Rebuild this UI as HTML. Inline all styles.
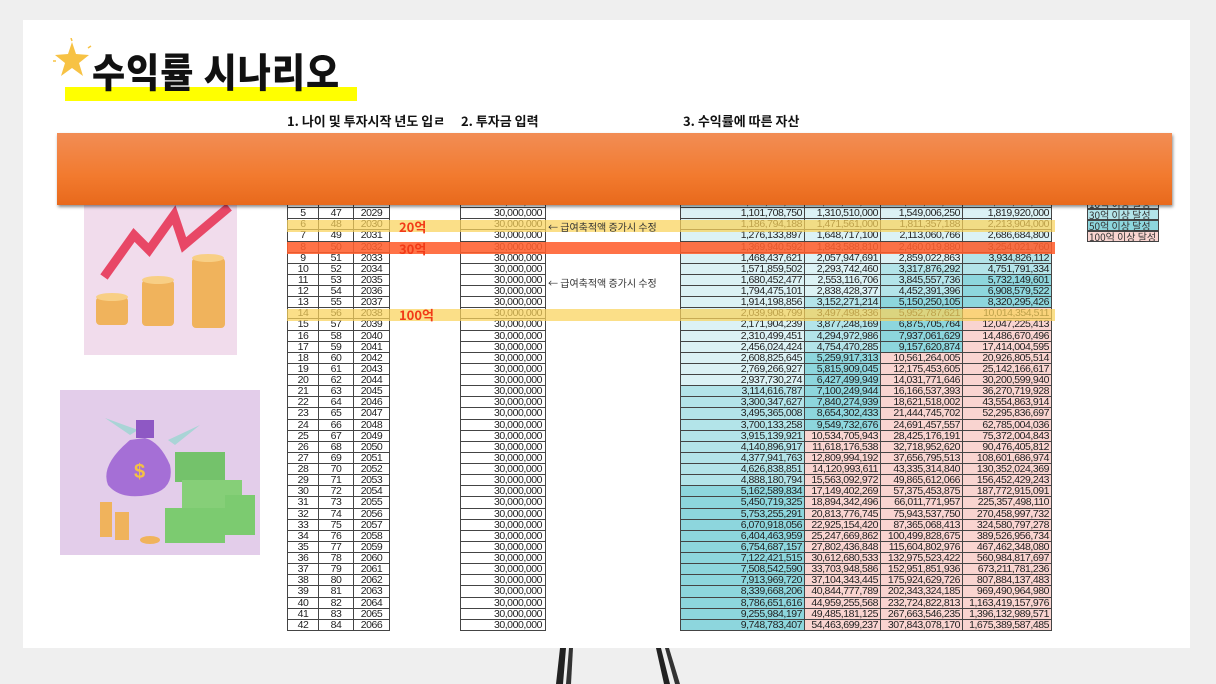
<!DOCTYPE html>
<html><head><meta charset="utf-8">
<style>
*{margin:0;padding:0;box-sizing:border-box}
body{width:1216px;height:684px;overflow:hidden;background:#efefef;position:relative;font-family:"Liberation Sans","Noto Sans CJK KR",sans-serif}
.slide{position:absolute;left:23px;top:20px;width:1167px;height:628px;background:#fff}
.title{position:absolute;left:92px;top:42px;font-size:36px;font-weight:900;color:#111;font-family:"Noto Sans CJK KR","NanumGothic",sans-serif;letter-spacing:1px;z-index:2;transform:scaleY(1.1);transform-origin:top left}
.ybar{position:absolute;left:65px;top:87px;width:292px;height:14px;background:#ffff00;z-index:1}
.hdr{position:absolute;top:111px;font-size:13px;font-weight:bold;color:#111;font-family:"Noto Sans CJK KR",sans-serif;white-space:nowrap}
.orange{position:absolute;left:57px;top:133px;width:1115px;height:72px;background:linear-gradient(#f28d55,#f27a2e 60%,#e8691c);box-shadow:1px 2px 3px rgba(0,0,0,.45);z-index:10}
.tbl{position:absolute;left:287px;top:197px;width:780px;font-family:"Liberation Sans",sans-serif;font-size:10.5px;letter-spacing:-0.45px;color:#222}
.r{position:relative;height:11.14px;line-height:11px}
.r i{position:absolute;top:0;height:11.14px;font-style:normal;border-right:1px solid #444;border-bottom:1px solid #444;text-align:center;white-space:nowrap;overflow:hidden}
.a{left:0;width:32px;border-left:1px solid #444}
.b{left:32px;width:35px}
.c{left:67px;width:36px}
.m{left:173px;width:86px;text-align:right!important;padding-right:3px;border-left:1px solid #444}
.r i.v{text-align:right;padding-right:2px}
.w1{left:393px;width:125px;border-left:1px solid #444}
.w2{left:518px;width:76px}
.w3{left:594px;width:82px}
.w4{left:676px;width:89px}
.L{background:#dcf2f5}.M{background:#b3e4e9}.T{background:#8dd6dd}.P{background:#f9d4d0}
.hl{position:absolute;left:287px;width:768px;height:12px;z-index:3}
.note{position:absolute;left:548px;font-size:10px;color:#333;font-family:"Noto Sans CJK KR",sans-serif;z-index:4;white-space:nowrap}
.big{position:absolute;left:399px;font-size:13px;font-weight:bold;color:#f23a17;font-family:"Noto Sans CJK KR",sans-serif;z-index:4}
.leg{position:absolute;left:1087px;width:72px;height:11px;font-size:10px;line-height:10px;border:1px solid #444;font-family:"Noto Sans CJK KR",sans-serif;color:#333;padding-left:1px;white-space:nowrap}
</style></head><body>
<div class="slide"></div>

<svg style="position:absolute;left:52px;top:38px" width="42" height="44" viewBox="0 0 42 44">
<polygon points="20,4 24,16 37,17 27,25 31,38 20,30 9,38 13,25 3,17 16,16" fill="#f7c244"/>
<line x1="19" y1="0" x2="20" y2="3" stroke="#f7c244" stroke-width="1.5"/>
<line x1="36" y1="10" x2="39" y2="8" stroke="#f7c244" stroke-width="1.5"/>
<line x1="1" y1="23" x2="4" y2="23" stroke="#f7c244" stroke-width="1.5"/>
</svg>
<div class="ybar"></div>
<div class="title">수익률 시나리오</div>

<div class="hdr" style="left:287px">1. 나이 및 투자시작 년도 입ㄹ</div>
<div class="hdr" style="left:461px">2. 투자금 입력</div>
<div class="hdr" style="left:683px">3. 수익률에 따른 자산</div>

<div style="position:absolute;left:84px;top:205px;width:153px;height:150px;background:#f1dcec;overflow:hidden">
<svg width="153" height="150" viewBox="0 0 153 150">
<polyline points="20,72 50,30 65,45 90,10 100,40 145,2" fill="none" stroke="#e84766" stroke-width="9" stroke-linejoin="miter"/>
<rect x="12" y="92" width="32" height="28" rx="4" fill="#f0b35c"/>
<ellipse cx="28" cy="92" rx="16" ry="4" fill="#f8cf85"/>
<rect x="58" y="75" width="32" height="46" rx="4" fill="#f0b35c"/>
<ellipse cx="74" cy="75" rx="16" ry="4" fill="#f8cf85"/>
<rect x="108" y="53" width="33" height="70" rx="4" fill="#f0b35c"/>
<ellipse cx="124" cy="53" rx="16" ry="4" fill="#f8cf85"/>
</svg></div>

<div style="position:absolute;left:60px;top:390px;width:200px;height:165px;background:#e3cdea;overflow:hidden">
<svg width="200" height="165" viewBox="0 0 200 165">
<path d="M45,28 L70,45 L78,40 Z" fill="#a9d4d6"/>
<path d="M140,35 L115,55 L108,50 Z" fill="#a9d4d6"/>
<path d="M70,50 Q40,75 48,95 Q60,110 88,105 Q115,100 110,75 Q100,52 85,48 Z" fill="#a56fd6"/>
<rect x="76" y="30" width="18" height="18" fill="#8e58c4"/>
<text x="74" y="88" font-size="20" fill="#f4c144" font-family="Liberation Sans" font-weight="bold">$</text>
<rect x="115" y="62" width="50" height="30" fill="#74c26b"/>
<rect x="122" y="90" width="60" height="30" fill="#86cf78"/>
<rect x="105" y="118" width="60" height="35" fill="#7ccb70"/>
<rect x="165" y="105" width="30" height="40" fill="#7ccb70"/>
<rect x="40" y="112" width="12" height="35" fill="#f0b35c"/>
<rect x="55" y="122" width="14" height="28" fill="#f0b35c"/>
<ellipse cx="90" cy="150" rx="10" ry="4" fill="#f0b35c"/>
</svg></div>

<div class="orange"></div>

<div class="tbl">
<div class="r"><i class="a">4</i><i class="b">46</i><i class="c">2028</i><i class="m">30,000,000</i><i class="v w1 L">1,020,675,000</i><i class="v w2 L">1,164,100,000</i><i class="v w3 L">1,320,875,000</i><i class="v w4 L">1,491,000,000</i></div>
<div class="r"><i class="a">5</i><i class="b">47</i><i class="c">2029</i><i class="m">30,000,000</i><i class="v w1 L">1,101,708,750</i><i class="v w2 L">1,310,510,000</i><i class="v w3 L">1,549,006,250</i><i class="v w4 L">1,819,920,000</i></div>
<div class="r"><i class="a">6</i><i class="b">48</i><i class="c">2030</i><i class="m">30,000,000</i><i class="v w1 L">1,186,794,188</i><i class="v w2 L">1,471,561,000</i><i class="v w3 L">1,811,357,188</i><i class="v w4 L">2,213,904,000</i></div>
<div class="r"><i class="a">7</i><i class="b">49</i><i class="c">2031</i><i class="m">30,000,000</i><i class="v w1 L">1,276,133,897</i><i class="v w2 L">1,648,717,100</i><i class="v w3 L">2,113,060,766</i><i class="v w4 L">2,686,684,800</i></div>
<div class="r"><i class="a">8</i><i class="b">50</i><i class="c">2032</i><i class="m">30,000,000</i><i class="v w1 L">1,369,940,592</i><i class="v w2 L">1,843,588,810</i><i class="v w3 L">2,460,019,880</i><i class="v w4 M">3,254,021,760</i></div>
<div class="r"><i class="a">9</i><i class="b">51</i><i class="c">2033</i><i class="m">30,000,000</i><i class="v w1 L">1,468,437,621</i><i class="v w2 L">2,057,947,691</i><i class="v w3 L">2,859,022,863</i><i class="v w4 M">3,934,826,112</i></div>
<div class="r"><i class="a">10</i><i class="b">52</i><i class="c">2034</i><i class="m">30,000,000</i><i class="v w1 L">1,571,859,502</i><i class="v w2 L">2,293,742,460</i><i class="v w3 M">3,317,876,292</i><i class="v w4 M">4,751,791,334</i></div>
<div class="r"><i class="a">11</i><i class="b">53</i><i class="c">2035</i><i class="m">30,000,000</i><i class="v w1 L">1,680,452,477</i><i class="v w2 L">2,553,116,706</i><i class="v w3 M">3,845,557,736</i><i class="v w4 T">5,732,149,601</i></div>
<div class="r"><i class="a">12</i><i class="b">54</i><i class="c">2036</i><i class="m">30,000,000</i><i class="v w1 L">1,794,475,101</i><i class="v w2 L">2,838,428,377</i><i class="v w3 M">4,452,391,396</i><i class="v w4 T">6,908,579,522</i></div>
<div class="r"><i class="a">13</i><i class="b">55</i><i class="c">2037</i><i class="m">30,000,000</i><i class="v w1 L">1,914,198,856</i><i class="v w2 M">3,152,271,214</i><i class="v w3 T">5,150,250,105</i><i class="v w4 T">8,320,295,426</i></div>
<div class="r"><i class="a">14</i><i class="b">56</i><i class="c">2038</i><i class="m">30,000,000</i><i class="v w1 L">2,039,908,799</i><i class="v w2 M">3,497,498,336</i><i class="v w3 T">5,952,787,621</i><i class="v w4 P">10,014,354,511</i></div>
<div class="r"><i class="a">15</i><i class="b">57</i><i class="c">2039</i><i class="m">30,000,000</i><i class="v w1 L">2,171,904,239</i><i class="v w2 M">3,877,248,169</i><i class="v w3 T">6,875,705,764</i><i class="v w4 P">12,047,225,413</i></div>
<div class="r"><i class="a">16</i><i class="b">58</i><i class="c">2040</i><i class="m">30,000,000</i><i class="v w1 L">2,310,499,451</i><i class="v w2 M">4,294,972,986</i><i class="v w3 T">7,937,061,629</i><i class="v w4 P">14,486,670,496</i></div>
<div class="r"><i class="a">17</i><i class="b">59</i><i class="c">2041</i><i class="m">30,000,000</i><i class="v w1 L">2,456,024,424</i><i class="v w2 M">4,754,470,285</i><i class="v w3 T">9,157,620,874</i><i class="v w4 P">17,414,004,595</i></div>
<div class="r"><i class="a">18</i><i class="b">60</i><i class="c">2042</i><i class="m">30,000,000</i><i class="v w1 L">2,608,825,645</i><i class="v w2 T">5,259,917,313</i><i class="v w3 P">10,561,264,005</i><i class="v w4 P">20,926,805,514</i></div>
<div class="r"><i class="a">19</i><i class="b">61</i><i class="c">2043</i><i class="m">30,000,000</i><i class="v w1 L">2,769,266,927</i><i class="v w2 T">5,815,909,045</i><i class="v w3 P">12,175,453,605</i><i class="v w4 P">25,142,166,617</i></div>
<div class="r"><i class="a">20</i><i class="b">62</i><i class="c">2044</i><i class="m">30,000,000</i><i class="v w1 L">2,937,730,274</i><i class="v w2 T">6,427,499,949</i><i class="v w3 P">14,031,771,646</i><i class="v w4 P">30,200,599,940</i></div>
<div class="r"><i class="a">21</i><i class="b">63</i><i class="c">2045</i><i class="m">30,000,000</i><i class="v w1 M">3,114,616,787</i><i class="v w2 T">7,100,249,944</i><i class="v w3 P">16,166,537,393</i><i class="v w4 P">36,270,719,928</i></div>
<div class="r"><i class="a">22</i><i class="b">64</i><i class="c">2046</i><i class="m">30,000,000</i><i class="v w1 M">3,300,347,627</i><i class="v w2 T">7,840,274,939</i><i class="v w3 P">18,621,518,002</i><i class="v w4 P">43,554,863,914</i></div>
<div class="r"><i class="a">23</i><i class="b">65</i><i class="c">2047</i><i class="m">30,000,000</i><i class="v w1 M">3,495,365,008</i><i class="v w2 T">8,654,302,433</i><i class="v w3 P">21,444,745,702</i><i class="v w4 P">52,295,836,697</i></div>
<div class="r"><i class="a">24</i><i class="b">66</i><i class="c">2048</i><i class="m">30,000,000</i><i class="v w1 M">3,700,133,258</i><i class="v w2 T">9,549,732,676</i><i class="v w3 P">24,691,457,557</i><i class="v w4 P">62,785,004,036</i></div>
<div class="r"><i class="a">25</i><i class="b">67</i><i class="c">2049</i><i class="m">30,000,000</i><i class="v w1 M">3,915,139,921</i><i class="v w2 P">10,534,705,943</i><i class="v w3 P">28,425,176,191</i><i class="v w4 P">75,372,004,843</i></div>
<div class="r"><i class="a">26</i><i class="b">68</i><i class="c">2050</i><i class="m">30,000,000</i><i class="v w1 M">4,140,896,917</i><i class="v w2 P">11,618,176,538</i><i class="v w3 P">32,718,952,620</i><i class="v w4 P">90,476,405,812</i></div>
<div class="r"><i class="a">27</i><i class="b">69</i><i class="c">2051</i><i class="m">30,000,000</i><i class="v w1 M">4,377,941,763</i><i class="v w2 P">12,809,994,192</i><i class="v w3 P">37,656,795,513</i><i class="v w4 P">108,601,686,974</i></div>
<div class="r"><i class="a">28</i><i class="b">70</i><i class="c">2052</i><i class="m">30,000,000</i><i class="v w1 M">4,626,838,851</i><i class="v w2 P">14,120,993,611</i><i class="v w3 P">43,335,314,840</i><i class="v w4 P">130,352,024,369</i></div>
<div class="r"><i class="a">29</i><i class="b">71</i><i class="c">2053</i><i class="m">30,000,000</i><i class="v w1 M">4,888,180,794</i><i class="v w2 P">15,563,092,972</i><i class="v w3 P">49,865,612,066</i><i class="v w4 P">156,452,429,243</i></div>
<div class="r"><i class="a">30</i><i class="b">72</i><i class="c">2054</i><i class="m">30,000,000</i><i class="v w1 T">5,162,589,834</i><i class="v w2 P">17,149,402,269</i><i class="v w3 P">57,375,453,875</i><i class="v w4 P">187,772,915,091</i></div>
<div class="r"><i class="a">31</i><i class="b">73</i><i class="c">2055</i><i class="m">30,000,000</i><i class="v w1 T">5,450,719,325</i><i class="v w2 P">18,894,342,496</i><i class="v w3 P">66,011,771,957</i><i class="v w4 P">225,357,498,110</i></div>
<div class="r"><i class="a">32</i><i class="b">74</i><i class="c">2056</i><i class="m">30,000,000</i><i class="v w1 T">5,753,255,291</i><i class="v w2 P">20,813,776,745</i><i class="v w3 P">75,943,537,750</i><i class="v w4 P">270,458,997,732</i></div>
<div class="r"><i class="a">33</i><i class="b">75</i><i class="c">2057</i><i class="m">30,000,000</i><i class="v w1 T">6,070,918,056</i><i class="v w2 P">22,925,154,420</i><i class="v w3 P">87,365,068,413</i><i class="v w4 P">324,580,797,278</i></div>
<div class="r"><i class="a">34</i><i class="b">76</i><i class="c">2058</i><i class="m">30,000,000</i><i class="v w1 T">6,404,463,959</i><i class="v w2 P">25,247,669,862</i><i class="v w3 P">100,499,828,675</i><i class="v w4 P">389,526,956,734</i></div>
<div class="r"><i class="a">35</i><i class="b">77</i><i class="c">2059</i><i class="m">30,000,000</i><i class="v w1 T">6,754,687,157</i><i class="v w2 P">27,802,436,848</i><i class="v w3 P">115,604,802,976</i><i class="v w4 P">467,462,348,080</i></div>
<div class="r"><i class="a">36</i><i class="b">78</i><i class="c">2060</i><i class="m">30,000,000</i><i class="v w1 T">7,122,421,515</i><i class="v w2 P">30,612,680,533</i><i class="v w3 P">132,975,523,422</i><i class="v w4 P">560,984,817,697</i></div>
<div class="r"><i class="a">37</i><i class="b">79</i><i class="c">2061</i><i class="m">30,000,000</i><i class="v w1 T">7,508,542,590</i><i class="v w2 P">33,703,948,586</i><i class="v w3 P">152,951,851,936</i><i class="v w4 P">673,211,781,236</i></div>
<div class="r"><i class="a">38</i><i class="b">80</i><i class="c">2062</i><i class="m">30,000,000</i><i class="v w1 T">7,913,969,720</i><i class="v w2 P">37,104,343,445</i><i class="v w3 P">175,924,629,726</i><i class="v w4 P">807,884,137,483</i></div>
<div class="r"><i class="a">39</i><i class="b">81</i><i class="c">2063</i><i class="m">30,000,000</i><i class="v w1 T">8,339,668,206</i><i class="v w2 P">40,844,777,789</i><i class="v w3 P">202,343,324,185</i><i class="v w4 P">969,490,964,980</i></div>
<div class="r"><i class="a">40</i><i class="b">82</i><i class="c">2064</i><i class="m">30,000,000</i><i class="v w1 T">8,786,651,616</i><i class="v w2 P">44,959,255,568</i><i class="v w3 P">232,724,822,813</i><i class="v w4 P">1,163,419,157,976</i></div>
<div class="r"><i class="a">41</i><i class="b">83</i><i class="c">2065</i><i class="m">30,000,000</i><i class="v w1 T">9,255,984,197</i><i class="v w2 P">49,485,181,125</i><i class="v w3 P">267,663,546,235</i><i class="v w4 P">1,396,132,989,571</i></div>
<div class="r"><i class="a">42</i><i class="b">84</i><i class="c">2066</i><i class="m">30,000,000</i><i class="v w1 T">9,748,783,407</i><i class="v w2 P">54,463,699,237</i><i class="v w3 P">307,843,078,170</i><i class="v w4 P">1,675,389,587,485</i></div>
</div>

<div class="hl" style="top:219.5px;background:rgba(250,210,90,.72)"></div>
<div class="hl" style="top:241.8px;background:rgba(255,95,45,.88)"></div>
<div class="hl" style="top:308.6px;background:rgba(250,210,90,.72)"></div>

<div class="big" style="top:217px">20억</div>
<div class="big" style="top:239px">30억</div>
<div class="big" style="top:305px">100억</div>
<div class="note" style="top:219px">← 급여축적액 증가시 수정</div>
<div class="note" style="top:275px">← 급여축적액 증가시 수정</div>

<div class="leg" style="top:198px;background:#dcf2f5">10억 이상 달성</div>
<div class="leg" style="top:209px;background:#b3e4e9">30억 이상 달성</div>
<div class="leg" style="top:220px;background:#8dd6dd">50억 이상 달성</div>
<div class="leg" style="top:231px;background:#f9d4d0">100억 이상 달성</div>

<svg style="position:absolute;left:0;top:648px" width="1216" height="36">
<polygon points="560,0 566,0 563,36 556,36" fill="#222"/>
<polygon points="569,0 573,0 571,36 566,36" fill="#333"/>
<polygon points="656,0 661,0 670,36 664,36" fill="#222"/>
<polygon points="665,0 669,0 680,36 675,36" fill="#333"/>
</svg>
</body></html>
